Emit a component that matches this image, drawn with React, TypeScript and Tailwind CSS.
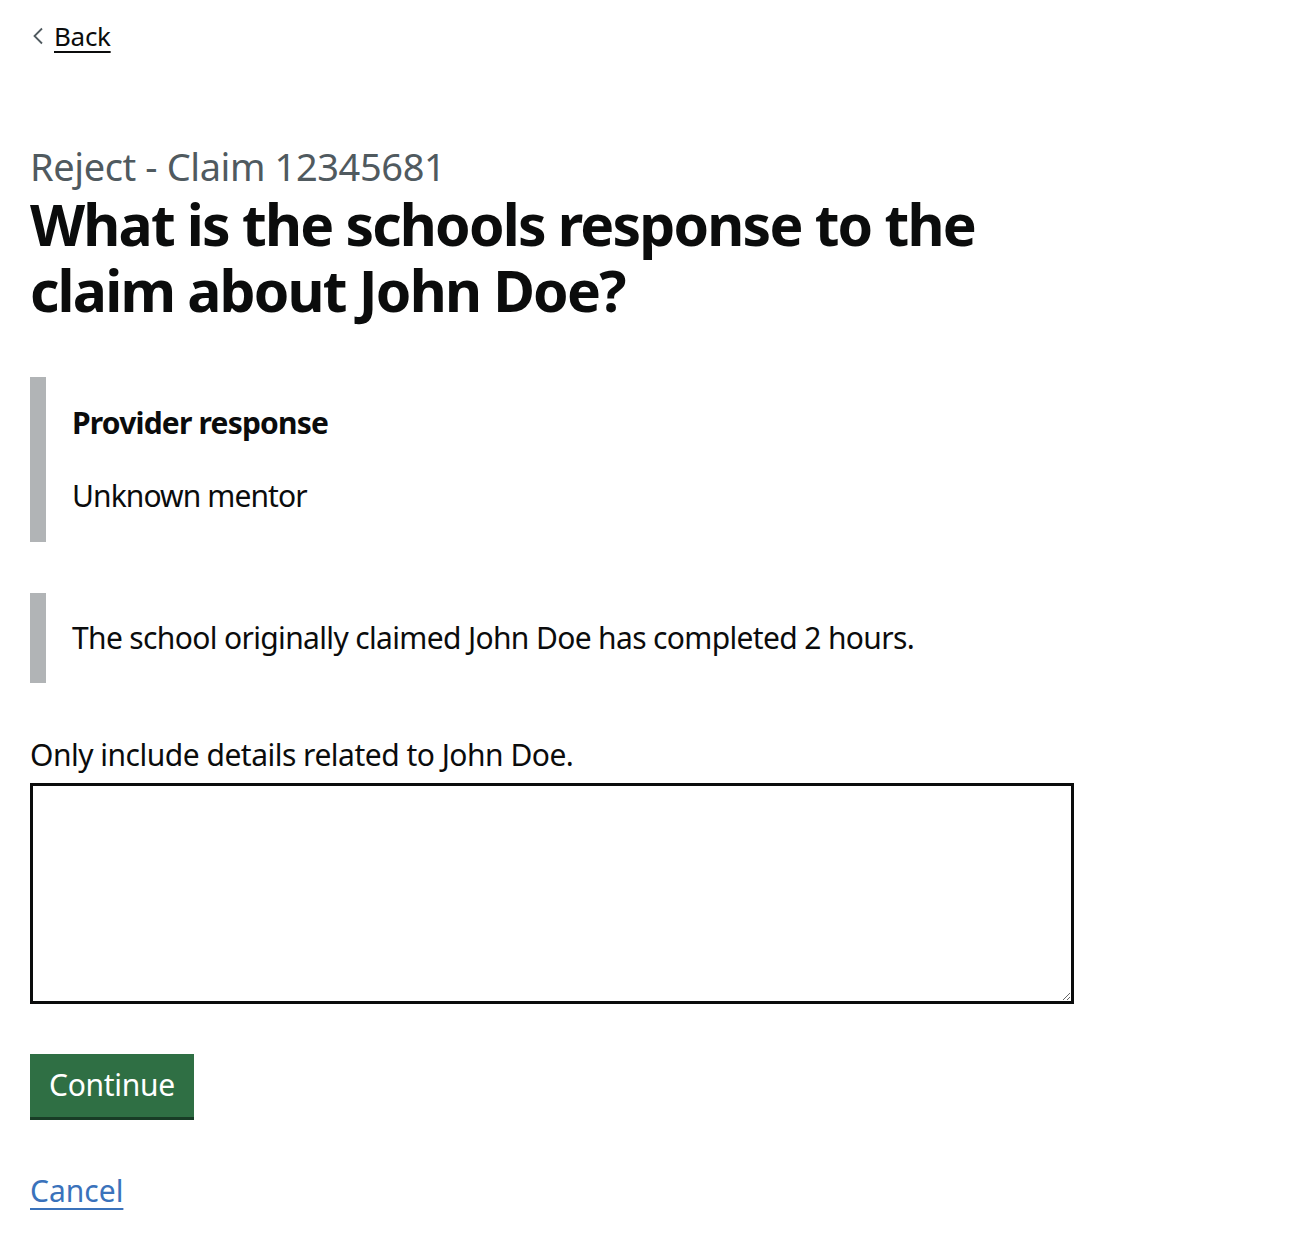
const App = () => {
  return (
    <div className="min-h-screen bg-white text-[#0b0c0c] px-[30px] font-['Noto_Sans',sans-serif]">
      {/* Back link */}
      <div className="pt-[19px]">
        <a href="#" className="inline-flex items-center gap-[10px] text-[26px] leading-[34px] text-[#0b0c0c]">
          <svg width="12" height="18" viewBox="0 0 12 18" className="ml-[2px]">
            <polyline points="10,1.5 2.5,9 10,16.5" fill="none" stroke="#505a5f" strokeWidth="1.8" />
          </svg>
          <span className="underline underline-offset-[5px] decoration-[2px] tracking-[-0.3px]">Back</span>
        </a>
      </div>

      {/* Heading */}
      <div className="mt-[96px]">
        <span className="block text-[38px] leading-[34px] text-[#505a5f] tracking-[-0.4px]">
          Reject - Claim 12345681
        </span>
        <h1 className="mt-[8px] text-[57px] leading-[66px] font-bold tracking-[-1.8px] max-w-[1000px]">
          What is the schools response to the claim about John Doe?
        </h1>
      </div>

      {/* Provider response */}
      <div className="mt-[54px] border-l-[16px] border-[#b1b4b6] pl-[26px] pt-[26px] pb-[26px]">
        <h2 className="text-[30px] leading-[40px] font-bold tracking-[-0.8px]">Provider response</h2>
        <p className="mt-[33px] text-[30px] leading-[40px] tracking-[-0.9px]">Unknown mentor</p>
      </div>

      <div className="mt-[51px] border-l-[16px] border-[#b1b4b6] pl-[26px] py-[25px]">
        <p className="text-[30px] leading-[40px] tracking-[-0.65px]">
          The school originally claimed John Doe has completed 2 hours.
        </p>
      </div>

      {/* Details */}
      <form className="mt-[52px]">
        <label htmlFor="details" className="block text-[30px] leading-[40px] tracking-[-0.5px]">
          Only include details related to John Doe.
        </label>
        <textarea
          id="details"
          className="mt-[8px] block w-[1044px] h-[221px] border-[3px] border-[#0b0c0c] p-[8px] text-[30px] outline-none"
        />

        <button
          type="button"
          className="mt-[50px] block bg-[#2f6f44] text-white text-[30px] leading-[40px] px-[19px] pt-[11px] pb-[12px] shadow-[0_3px_0_#183c26] tracking-[-0.3px]"
        >
          Continue
        </button>

        <div className="mt-[54px]">
          <a href="#" className="text-[30px] leading-[40px] text-[#3a72bb] underline underline-offset-[6px] decoration-[2px]">
            Cancel
          </a>
        </div>
      </form>
    </div>
  );
};

export default App;
